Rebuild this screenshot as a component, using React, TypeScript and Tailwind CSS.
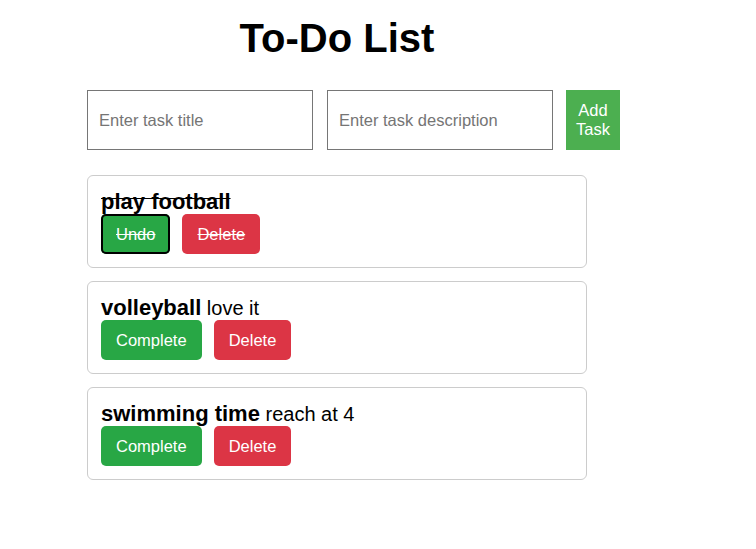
import React, { useState } from 'react'

type Task = { id: number; title: string; description: string; completed: boolean }

const initialTasks: Task[] = [
  { id: 1, title: 'play football', description: '', completed: true },
  { id: 2, title: 'volleyball', description: 'love it', completed: false },
  { id: 3, title: 'swimming time', description: 'reach at 4', completed: false },
]

export default function App() {
  const [tasks, setTasks] = useState<Task[]>(initialTasks)
  const [title, setTitle] = useState('')
  const [description, setDescription] = useState('')

  function addTask() {
    if (!title) return
    setTasks([...tasks, { id: Date.now(), title, description, completed: false }])
    setTitle('')
    setDescription('')
  }

  const toggle = (id: number) =>
    setTasks(tasks.map((t) => (t.id === id ? { ...t, completed: !t.completed } : t)))
  const remove = (id: number) => setTasks(tasks.filter((t) => t.id !== id))

  return (
    <div className="min-h-[549px] bg-white text-black font-['Liberation_Sans',Arial,sans-serif]">
      <div className="ml-[87px] w-[500px] pt-[15px]">
        <h1 className="text-center text-[40px] leading-[46px] font-bold mb-[29px]">To-Do List</h1>

        <div className="flex w-[540px]">
          <input
            type="text"
            value={title}
            onChange={(e) => setTitle(e.target.value)}
            placeholder="Enter task title"
            className="w-[226px] h-[60px] border border-[#767676] px-[11px] text-[16.5px] placeholder:text-[#757575] outline-none"
          />
          <input
            type="text"
            value={description}
            onChange={(e) => setDescription(e.target.value)}
            placeholder="Enter task description"
            className="ml-[14px] w-[226px] h-[60px] border border-[#767676] px-[11px] text-[16.5px] placeholder:text-[#757575] outline-none"
          />
          <button
            onClick={addTask}
            className="ml-[13px] w-[54px] h-[60px] bg-[#4caf50] text-white text-[16.5px] leading-[19px]"
          >
            Add Task
          </button>
        </div>

        <div className="mt-[25px] flex flex-col gap-[13px]">
          {tasks.map((task) => (
            <div key={task.id} className="border border-[#cccccc] rounded-[6px] px-[13px] pt-[13px] pb-[13px]">
              <div className={`h-[25px] leading-[22px] pt-[2px] ${task.completed ? 'line-through' : ''}`}>
                <span className="text-[22px] font-bold">{task.title}</span>
                {task.description && <span className="text-[20px]"> {task.description}</span>}
              </div>
              <div className="flex gap-[12px]">
                <button
                  onClick={() => toggle(task.id)}
                  className={`bg-[#28a745] text-white text-[16.5px] leading-[20px] px-[15px] py-[10px] rounded-[5px] ${
                    task.completed ? 'line-through ring-2 ring-inset ring-black' : ''
                  }`}
                >
                  {task.completed ? 'Undo' : 'Complete'}
                </button>
                <button
                  onClick={() => remove(task.id)}
                  className={`bg-[#dc3545] text-white text-[16.5px] leading-[20px] px-[15px] py-[10px] rounded-[5px] ${
                    task.completed ? 'line-through' : ''
                  }`}
                >
                  Delete
                </button>
              </div>
            </div>
          ))}
        </div>
      </div>
    </div>
  )
}
